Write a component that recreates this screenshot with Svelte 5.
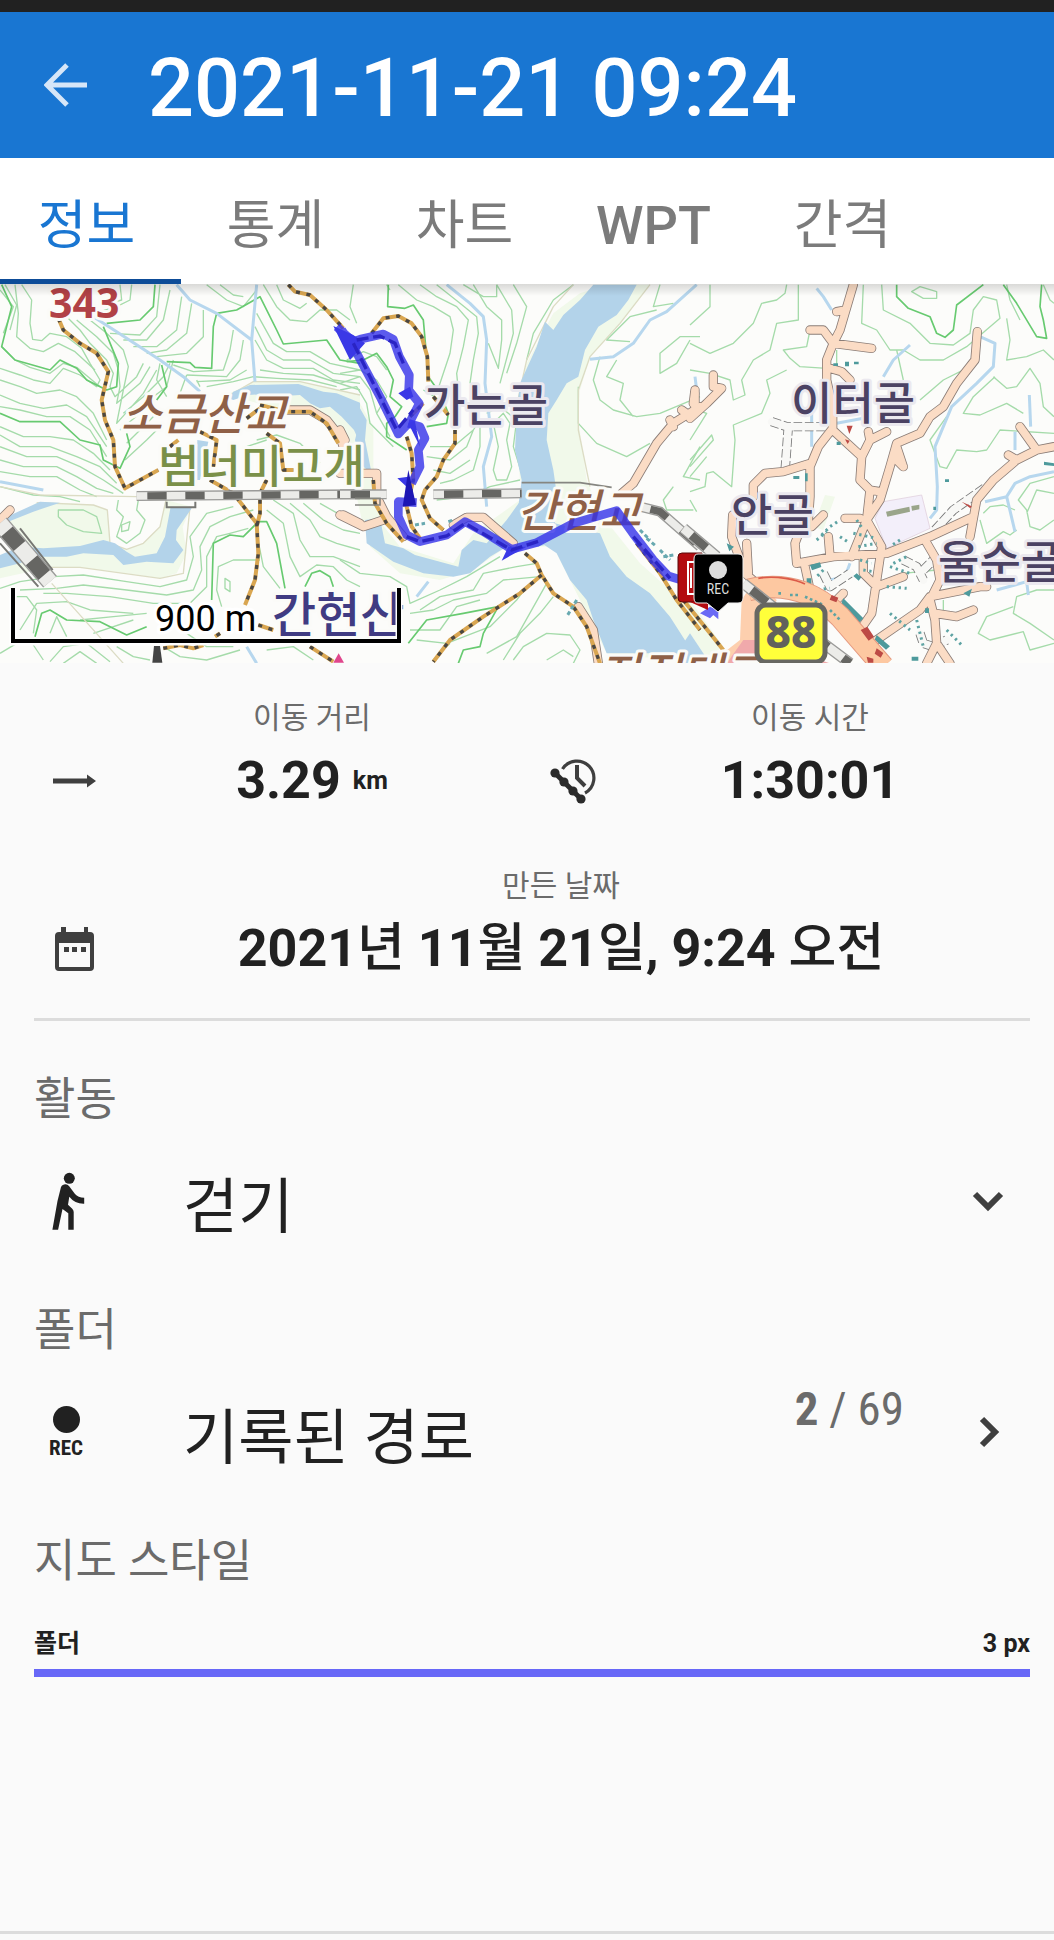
<script lang="ts">
	const tabs = ['정보', '통계', '차트', 'WPT', '간격'];
	let active = '정보';
	let activity = '걷기';

	// the map is drawn in three sheets, each at three units per pixel
	const west = 'translate(0 280) scale(.33333)';
	const mid = 'translate(340 280) scale(.33333)';
	const east = 'translate(690 280) scale(.33333)';

	const parks = [
		[west, 'M110 668 180 668 280 675 322 690 330 790 380 808 430 790 480 740 498 660 575 680 548 740 560 820 530 880 480 895 380 880 240 862 150 862 0 895 0 860 60 770 0 740Z'],
		[west, 'M690 340 760 305 900 305 1000 325 1080 345 1080 520 1040 510 1000 430 930 385 830 385 700 350Z'],
		[mid, 'M0 340 60 370 100 440 100 560 130 640 130 720 70 740 30 560 0 470Z'],
		[mid, 'M100 700 180 800 340 850 400 760 540 660 620 800 500 800 400 870 300 900 180 880 90 800Z'],
		[mid, 'M720 40 800 14 930 14 840 130 750 230 720 330 715 420 740 600 780 700 900 850 1080 1010 1080 1150 800 1120 640 800 610 620 540 600 525 400 560 250 640 100Z'],
		[east, 'M0 960 100 1100 20 1150 -100 1150Z'],
		[east, 'M405 645 435 650 400 750 370 740Z']
	];

	const water = [
		[west, 'M685 355 700 335 750 315 895 312 970 335 1010 340 1080 368 1080 490 1062 450 1025 410 990 380 960 385 930 370 900 345 850 348 800 342 745 345 700 360Z'],
		[west, 'M0 825 60 800 130 805 240 798 310 780 345 790 380 815 405 830 470 820 495 770 512 680 575 685 530 750 528 780 550 810 520 850 440 845 370 855 340 825 250 820 200 830 100 830 60 850 0 865Z'],
		[west, 'M0 720 120 665 180 668 100 695 0 735Z'],
		[west, 'M592 480 625 485 600 600 590 600Z'],
		[mid, 'M0 345 60 385 80 420 75 480 95 580 70 560 45 480 55 440 20 395 0 385Z'],
		[mid, 'M75 720 120 715 135 790 190 805 225 825 355 860 365 810 400 780 440 790 500 720 550 650 640 640 640 790 590 800 500 800 450 830 390 880 340 890 250 880 160 845 80 790Z'],
		[mid, 'M760 14 890 14 865 60 830 105 775 140 735 210 715 290 680 310 650 360 625 400 620 480 640 570 650 640 645 730 700 745 780 760 810 830 860 890 930 940 990 1010 1060 1120 800 1120 760 1020 740 960 690 900 650 820 560 760 530 720 545 600 525 510 530 400 540 310 590 200 615 125 640 150 670 105 720 60Z'],
		[east, 'M0 1060 60 1150 -60 1150Z']
	];

	const streams = [
		[west, 'M280 110 350 155 480 240 550 290 600 335'],
		[west, 'M530 14 570 60 650 100 755 180M770 14 755 180 765 305M0 605 130 630M740 1100 770 1150'],
		[mid, 'M320 14 390 70 430 110 440 180 435 310 455 470 430 560 440 680M1070 14 980 95 930 120 880 190 820 230 750 238M1065 290 1070 330M265 905 230 950'],
		[east, 'M380 25 400 50 425 90M660 195 610 240 580 290M870 170 915 190 910 260 860 310 785 380 735 500 742 620 740 690 720 715M365 400 365 500M440 430 520 415M1018 345 1022 440M975 455 975 510M1092 575 1020 590 975 610 950 650 885 665M950 650 975 755M920 930 1010 905 1015 945M480 850 465 890 420 900']
	];

	const contours = [
		[west, 'M65 14 95 60 90 130 98 178 125 182 150 160 200 170 245 205 270 250 300 300 290 320 240 285 190 265 150 310 100 300 60 285 0 265'],
		[west, 'M5 200 45 240 90 262 150 280 190 250 230 262 300 320M45 14 55 100 50 170 90 205 130 215 175 190 225 215 285 270'],
		[west, 'M0 300 60 320 110 340 180 330 230 350 280 400 320 480M0 345 60 370 130 385 200 375 260 410 320 500M0 380 60 390 140 410 210 410 270 450 320 530'],
		[west, 'M0 440 70 470 150 470 220 480 280 520 330 570M0 465 60 500 150 500 230 530 300 560 350 610M0 500 80 530 170 530 240 560 310 600 370 640M0 540 70 560 170 560 230 590 290 625 340 640M0 575 90 590 170 590 240 630 290 650M0 620 100 645 180 650 240 665'],
		[west, 'M200 110 240 150 270 190 320 240 340 280 330 320 345 350 410 290 430 250M230 120 290 170 340 220 355 270 360 320 350 370 420 310 450 260M270 120 320 160 370 210 385 260 370 330 350 430 430 340 470 270M370 400 430 350 490 290 510 250'],
		[west, 'M360 450 420 400 460 350 500 320M380 490 430 440 470 400M375 540 440 480 480 440M480 250 470 300 500 350M520 240 500 320M560 285 540 340M590 300 600 320'],
		[west, 'M395 14 390 60 350 80 300 95M360 14 365 60 310 75M330 160 420 165 470 110 480 14M370 180 440 180 490 120 510 30M400 200 470 200 530 150 545 50M440 220 500 210 560 160 575 70M470 230 560 220 610 170 610 90'],
		[west, 'M520 255 580 275 670 270 690 210 700 150M560 285 680 290 720 240 730 180M590 305 690 300 740 270M620 320 700 305 760 290 830 295 930 300 1010 320'],
		[west, 'M620 14 680 60 730 80 770 30M660 14 700 45 730 50M790 14 830 80 870 120 920 125 960 90 1010 90 1050 120M830 14 850 60 900 85 920 70M770 100 820 190 860 215 930 215 990 250 1080 270M765 140 800 210 850 240 930 240 1000 280 1080 290M765 180 800 240 850 265 940 265 1000 300 1080 310M780 270 850 280 940 285 1080 330'],
		[west, 'M175 690 200 690 250 690 290 710 305 760 250 755 200 735 175 710ZM355 660 350 690 370 710 350 770 380 790 420 760 435 720 410 690 415 660M365 735 390 725 385 750 365 755ZM675 895 690 905 690 935 675 925Z'],
		[west, 'M770 480 830 465 900 490 960 550M740 500 800 480M700 680 620 700 570 770 580 830 560 900 480 920 380 905 250 885 160 890 60 905 0 925M760 690 690 710 630 740 600 800 605 870 580 930 500 945 380 930 250 915 170 925 60 930'],
		[west, 'M745 745 690 760 650 770 620 830 620 920 570 970 460 970 330 950 200 940 130 940M780 840 700 840 655 860 650 930 665 980M770 760 790 860 840 925M800 690 850 730 870 830 900 890 950 855 1000 860 1040 900 1080 920M820 660 880 700 900 780 930 830 1000 830 1080 860M870 670 930 720 960 770 1010 790 1080 810M910 670 970 720 1030 750 1080 760M960 670 1030 710 1080 720'],
		[west, 'M50 950 80 950 110 990 100 1060M60 1050 110 970 200 965 270 990 400 1000M200 1070 170 1010 150 1060M240 1020 340 1010 440 1000M280 1060 400 1020M0 1120 50 1090 90 1080 130 1140M150 1145 190 1100 260 1090 330 1145M190 1150 240 1115 290 1150M350 1100 400 1130 450 1140M490 1100 540 1130 620 1140 720 1110M560 1060 620 1100 700 1100M800 1110 880 1100 940 1140M0 30 40 80 10 160M15 14 50 75 30 150'],
		[mid, 'M40 14 30 80 50 130M140 14 150 30M175 14 230 60 280 80 330 110 340 150 330 220 300 310 290 340M240 14 290 50 350 80 385 120 370 200 350 280 355 330M290 14 360 70 410 110 415 160 400 240 390 310M370 14 430 50 470 50 470 14M400 14 440 80 485 120 485 180 475 265 445 190M470 14 515 90 520 160 480 310M520 14 560 80 530 190 500 280'],
		[mid, 'M20 240 70 215 110 230 140 270M0 280 60 270 110 300 140 350 110 400M0 310 60 290 90 330 110 400 150 470M0 330 50 320 80 370 90 430 160 500M250 330 300 360M270 500 340 500 400 450 420 420M260 530 330 540 380 500 400 450M280 570 330 580 390 540M300 610 340 600 400 570 420 500 420 440M290 660 380 650 450 620 540 600'],
		[mid, 'M460 430 490 400 510 430 500 480 515 560 500 600 470 600 460 570 475 500ZM440 400 480 380 530 420 520 500 545 580M0 840 60 880 150 890 200 920 210 970 300 930 380 890 480 830M240 990 300 950 400 930 430 880 530 860 590 850M210 1000 280 990 340 960 440 940 490 900 600 890M210 1050 300 1050 350 980 420 960M230 1080 320 1090 450 1040 530 960 560 920M280 1140 330 1090M440 1120 530 1070 620 910M490 1140 540 1060 600 1000 640 950M520 1140 550 1100 620 1060 690 1065 720 1110 700 1150M620 1140 670 1110 700 1130'],
		[mid, 'M700 14 640 60 580 160 560 240M960 14 940 80 1000 70M950 90 870 110 800 180 870 185M1080 170 1020 170 960 220 960 280 1010 250 1050 180M780 230 760 300 780 360 820 390 890 410 960 400 1080 350M715 320 715 430 770 490 860 530 930 490M830 240 800 290 850 310 840 360 880 410M1080 500 1030 590 1080 600M1000 620 970 660 980 690 1060 690'],
		[east, 'M60 14 60 80 0 135M290 14 285 40 260 60 215 70 190 130 130 190 60 220 0 190M325 14 325 120 260 130 240 210 190 240 155 300 165 345 130 360 120 300 60 280 0 270M300 235 280 210 350 200 360 150M410 265 330 260 300 235M290 270 230 300 240 340 215 400 130 435 135 480 125 620 70 575 50 580 45 620 0 635M0 560 70 480 65 465 0 540M0 590 50 530M0 480 50 400 20 390M0 660 20 695'],
		[east, 'M520 14 515 130 560 150 600 210 640 210 690 240 760 240 830 200 930 115 920 60 880 50 850 90 840 160 790 195 720 190 660 130 580 90 575 14M665 35 690 20 740 35 740 55 700 55ZM1060 14 1080 60 1092 70M990 120 960 60 950 14M950 115 960 180 950 240 1010 230 1060 210 1092 240M690 360 760 300 840 260M770 410 720 480 750 560 770 565 800 510 860 515 890 510 930 450 1092 460M915 290 850 350 820 400 870 405 950 370 1000 400M910 290 950 325 980 320 1020 265 1050 310 1060 380 1092 410M880 700 900 680 940 675 975 690M870 720 890 790 940 755 960 765 980 750M1092 590 1020 610 985 660 1010 690 1020 740 1050 750 1092 720M1092 640 1040 630 1010 700M620 210 640 300M440 210 440 260'],
		[east, 'M1092 930 1040 930 980 950 970 1000 1020 1030 1092 1080M970 980 890 1010 865 1060 900 1080 1000 1055 1020 1110 1092 1090M760 960 760 1000M640 880 740 870 740 920M380 940 430 1000']
	];

	const majors = [
		[west, 'M5 14 35 80 5 200 45 240 150 270 180 240 230 265 260 300 320 330 350 320 355 250 310 140M0 400 60 425 180 425 240 480 300 495 310 540 360 565 390 500 380 460M320 130 420 120 460 80 465 14M500 245 570 248 585 262 635 265 640 140 650 100 710 90 780 50 830 150 850 192 980 180 1020 240 1080 250M485 255 500 320 470 360M635 960 640 790 690 765 730 770 775 725 800 725 830 790 855 925M915 920 935 880 960 872 990 890 1000 920M105 1070 125 1000 150 990 200 1020 300 1025 380 1065 440 1040'],
		[mid, 'M145 14 143 80 195 85 220 75 250 120 265 290 300 340 325 400 320 430 260 440M20 245 70 240 110 220 140 260 160 300 150 350 185 380 165 410 140 430 140 470 200 510M205 1090 260 1020 370 1000 475 980 430 1060 420 1100 370 1110 355 1150'],
		[east, 'M620 14 620 50 655 85 720 110 740 160 765 172 790 150 800 75 880 14M940 14 980 70 1040 170 1070 175 1060 120 1050 80 1055 14']
	];

	const banks = [
		[west, 'M0 620 120 645 410 650M110 668 280 675 322 690 330 790 380 808 430 790 480 740 498 660M150 862 240 862 480 895 550 880 570 680M155 910 370 1150M690 345 760 305 900 305 1080 345'],
		[mid, 'M930 14 840 130 750 230 715 330 715 450 750 620M700 14 640 80 560 240 525 400']
	];

	const lanes = [
		[east, 'M245 425 290 440 430 440M295 440 285 575M735 750 790 690 890 620M640 840 680 860 700 900M400 880 420 920 480 880M690 1060 700 1090 730 1100 770 1080M700 870 730 840']
	];

	const roads = [
		[west, 'M860 390 930 390 980 420 1020 470 1030 500M1030 705 1080 730M0 720 30 690'],
		[mid, 'M0 450 15 480M0 580 110 580 110 650 140 710 190 770M0 705 70 740 130 720M340 735 380 712 430 712 520 790M845 640 880 610 950 490 1000 430 1080 380M1000 440 990 420M1040 400 1025 390M1060 370 1065 330M715 980 760 1050 775 1150'],
		[east, 'M0 415 50 370 95 325 70 320 70 285M15 380 15 340M490 14 450 150 430 190 410 240 410 300 428 380 428 445 385 500 360 560 360 650 355 720M440 95 465 90M360 150 400 150 430 190 545 205M420 265 455 275 480 300M360 550 280 575 225 580 190 615 190 650M428 450 515 530 510 600 540 630 530 720M515 530 540 480 590 455M540 480 535 455M540 630 570 635M862 155 855 240 800 310 760 380 720 410 690 460 620 490 600 560 570 660 530 720 575 800 560 900 545 1000 510 1050M610 530 640 560M620 500 640 560M465 715 510 715M530 720 485 830M128 705 125 770 165 880 200 910M170 790 175 880M355 700 330 750 315 790 320 850 430 830 590 820 720 770 850 710M400 705 365 740M415 770 420 830M345 860 360 930M705 780 740 840 750 900 720 960 735 1020 740 1090 710 1150M1092 500 1040 510 980 540 910 600 860 660 840 770M1040 510 990 440M980 540 955 525M545 1090 690 990 720 950 870 920 890 920M735 1000 800 1010 850 990M520 830 520 880 560 920 640 890M740 1090 780 1150M460 940 440 960']
	];

	const trails = [
		[west, 'M175 115 190 150 240 190 290 220 325 275 305 360 315 420 340 480 345 560 375 625 475 570M865 14 885 35 930 45 980 90 1030 145M630 600 700 640 770 730 775 820 765 900 735 975M800 600 780 640 780 700 770 740M510 500 535 480M600 455 650 480 640 560M800 460 840 490 850 570 880 570M780 375 860 395 930 395 980 430 1015 490M775 1035 820 1050M660 1060 645 1070M490 1105 540 1095 580 1105 610 1095M930 1100 1000 1145M740 415 780 385'],
		[mid, 'M95 160 130 115 175 108 215 130 245 170 262 230 265 305M200 470 215 520 220 600 200 680 215 740 240 775M345 450 345 490 310 540 290 590 255 630 245 660 270 715 310 750M280 350 325 405M210 410 250 370M555 820 590 850 605 885 640 940 700 980 740 1040 780 1150M605 885 540 940 430 1010 330 1080 280 1145M100 600 105 670 140 730 190 785M890 790 960 880 1010 960 1080 1050'],
		[east, 'M-20 960 60 1060 100 1110']
	];

	const rails = [
		[west, 'M410 648 1080 643', 22],
		[west, 'M0 730 150 905', 46],
		[mid, 'M0 643 140 643M280 643 545 640', 22],
		[mid, 'M900 680 960 695 1080 800', 22],
		[east, 'M-20 745 80 830M160 910 260 990 400 1090 480 1150', 26]
	];

	const buildings =
		'M430 250h14v8h-14zM465 245h12v14h-12zM492 245h14v8h-14zM310 588h18v9h-18zM765 598h12v8h-12zM345 580h8v24h-8zM110 790l22 10-14 14zM360 855l30-8 4 14-28 10zM460 955l60 60-14 14-54-54zM560 1065l40 34-12 10-34-30zM820 940l26-14-8 24zM665 1130h20v12h-20zM1062 545l30 5v8l-30-3zM500 880l14 12-8 10-16-14zM705 985h12v14h-12zM730 680h8v10h-8zM350 895h14v20h-14zM320 915h26v8h-26zM440 485h12v10h-12z';

	const labels = [
		['가는골', 424, 422],
		['이터골', 791, 420],
		['안골', 731, 532],
		['울순골', 938, 579]
	];
</script>

<div class="screen">
	<header>
		<button class="back" aria-label="뒤로">
			<svg viewBox="0 0 44 44" width="44" height="44">
				<path d="M43 22H4M23 2 3 22l20 20" fill="none" stroke="#d6e6f8" stroke-width="5" />
			</svg>
		</button>
		<h1>2021-11-21 09:24</h1>
	</header>

	<nav role="tablist">
		{#each tabs as tab}
			<button
				role="tab"
				class:latin={tab === 'WPT'}
				aria-selected={tab === active}
				on:click={() => (active = tab)}>{tab}</button>
		{/each}
	</nav>

	<svg class="map" viewBox="0 284 1054 379">
		<defs>
			<linearGradient id="shade" x1="0" y1="0" x2="0" y2="1">
				<stop offset="0" stop-color="#000" stop-opacity=".14" />
				<stop offset="1" stop-color="#000" stop-opacity="0" />
			</linearGradient>
		</defs>
		<rect y="284" width="1054" height="379" fill="#fcfcfa" />
		{#each parks as [t, d]}<path class="park" transform={t} {d} />{/each}
		{#each contours as [t, d]}<path class="contour" transform={t} {d} />{/each}
		{#each majors as [t, d]}<path class="contour major" transform={t} {d} />{/each}
		{#each banks as [t, d]}<path class="bank" transform={t} {d} />{/each}
		{#each streams as [t, d]}<path class="stream" transform={t} {d} />{/each}
		{#each water as [t, d]}<path class="water" transform={t} {d} />{/each}

		<!-- school grounds and the built-up area by the station -->
		<g transform={east}>
			<path d="M555 715 580 665 695 645 720 745 590 805Z" fill="#f3effa" stroke="#dcc8d8" stroke-width="2" />
			<path d="M588 695 658 680 660 695 592 710ZM664 678 688 674V688L666 692Z" fill="#9aa58a" />
			<path d="M155 960 200 890 260 960 210 1100 150 1150 60 1150 150 1080Z" fill="#fdcfae" />
			<path d="M110 1150 160 1080 210 1080 420 1150Z" fill="#f0a9ab" />
		</g>
		{#each lanes as [t, d]}
			<path class="lane-case" transform={t} {d} />
			<path class="lane" transform={t} {d} />
		{/each}
		{#each roads as [t, d]}<path class="road-case" transform={t} {d} />{/each}
		{#each roads as [t, d]}<path class="road" transform={t} {d} />{/each}
		<g transform={east}>
			<path d={buildings} fill="#4e9a9c" />
			<path
				d="M395 765 420 740 450 720M380 780 410 755M490 760 560 775M500 720 520 750M505 800 560 790M510 840 545 850M520 870 550 875M600 860 660 880M610 850 650 830M590 920 650 925M365 930 420 925M600 1000 660 1050M680 1020 700 1100M770 1050 820 1100M400 870 380 890M630 780 600 800M450 770 480 790"
				stroke="#5ea3a3" stroke-width="9" stroke-dasharray="7 11" fill="none" />
			<path d="M175 930C300 900 390 950 450 1010L580 1160" class="highway-case" />
			<path d="M175 930C300 900 390 950 450 1010L580 1160" class="highway" />
			<path d="M205 895C260 885 320 900 345 912" fill="none" stroke="#dc5a48" stroke-width="5" />
			<path d="M265 940H280M300 945H330M345 950 400 975M420 990 450 1020" fill="none" stroke="#5ea3a3" stroke-width="8" stroke-dasharray="8 8" />
			<path d="M470 437h18l-10 25zM465 478l14 4-6 10zM425 945l20 8-6 14-20-8zM512 1050l20-10 20 30-16 12zM560 1105l20 14-8 14-18-12zM815 665l30 14-4 6zM530 1130l20 6v12h-16z" fill="#bd4a45" />
		</g>
		{#each trails as [t, d]}
			<path class="trail" transform={t} {d} />
			<path class="trail-dash" transform={t} {d} />
		{/each}
		{#each rails as [t, d, w]}
			<path transform={t} {d} fill="none" stroke="#9a9a98" stroke-width={Number(w) + 8} />
			<path transform={t} {d} fill="none" stroke="#ecece9" stroke-width={w} />
			<path transform={t} {d} fill="none" stroke="#666663" stroke-width={w} stroke-dasharray="58 56" stroke-dashoffset="-32" />
		{/each}
		<path transform={mid} d="M545 608 720 608 815 622M45 655H120V675H45" fill="none" stroke="#868681" stroke-width="5" />
		<path transform={west} d="M500 665V682H586V665M60 745 158 870M0 790 115 920" fill="none" stroke="#777773" stroke-width="6" />
		<path transform={west} d="M462 1098h18l7 50h-30z" fill="#444" />
		<path transform={west} d="M1016 1120l16 28h-32z" fill="#e0468c" />
		<path
			transform={mid}
			d="M900 750 930 780M920 775 950 800M960 810 990 840M1000 825 970 830M225 735 255 730M325 725 340 720M710 960 680 1010"
			stroke="#68a9b0" stroke-width="9" stroke-dasharray="12 8" fill="none" />

		<g class="text">
			<text class="height" x="49" y="318">343</text>
			<text class="bridge" x="121" y="430">소금산교</text>
			<text class="pass" x="158" y="483">범너미고개</text>
			<text class="bridge" x="517" y="527">간현교</text>
			<text class="bridge" x="598" y="690">지정대교</text>
			<text class="peak" x="272" y="632">간현산</text>
			{#each labels as [name, x, y]}<text class="village" {x} {y}>{name}</text>{/each}
		</g>

		<!-- recorded track -->
		<g transform={mid}>
			<g class="track">
				<path d="M-10 140 40 185 60 178 130 162 160 178 178 230 208 285 206 330 238 370 210 425 175 462 120 350 40 200 5 150" />
				<path d="M205 430 240 440 255 475 235 510 240 560 215 610" />
				<path d="M230 668 175 665 175 710 200 765 240 785 320 765 375 725 430 755 515 808 590 788 700 730 830 692 880 762 940 840 985 888 1040 905" />
			</g>
			<path d="M-20 138 40 165 75 190 30 240ZM175 340 210 320 220 350 200 360ZM485 842 505 800 560 800ZM172 595 205 590 200 620ZM205 430 225 425 240 500Z" fill="#3a38e6" />
			<path d="M188 680 205 570 228 675Z" fill="#1c16b4" />
			<path d="M40 190 170 450 220 390M50 180 120 168 165 190 190 250M200 770 240 785 320 768 375 730 515 810 600 782M880 770 990 895" fill="none" stroke="#2a24c4" stroke-width="10" stroke-dasharray="36 14" />
		</g>
		<path transform={east} d="M30 1000 60 980 85 990 85 1018 70 1005 60 1015Z" fill="#6a6af5" />

		<path d="M682 553h20v49h-20q-4 0-4-4v-41q0-4 4-4Z" fill="#b30c10" stroke="#5d0a0a" />
		<path d="M690 602h18v8Z" fill="#b30c10" />
		<path d="M694 562h-6v32h6M691 568v20" fill="none" stroke="#fff" stroke-width="2" />
		<path d="M698 554h40q5 0 5 5v39q0 5-5 5h-10l-10 9-11-9h-9q-4 0-4-5v-39q0-5 4-5Z" stroke="#eee" />
		<circle cx="718" cy="570" r="9" fill="#ddd" />
		<text class="pin" x="718" y="594">REC</text>

		<rect x="757" y="605" width="68" height="57" rx="9" fill="#ffff3a" stroke="#676762" stroke-width="5" />
		<text class="shield" x="791" y="648">88</text>

		<path d="M13 588V642H399V588" fill="none" stroke="#fff" stroke-width="7" />
		<path d="M13 588V641H399V588" fill="none" stroke="#000" stroke-width="4" />
		<text class="scale" x="155" y="631">900 m</text>
		<rect y="284" width="1054" height="12" fill="url(#shade)" />
	</svg>

	<dl class="stats">
		<div class="stat">
			<svg viewBox="0 0 48 48" width="48" height="48">
				<path d="M2 21.500h34V17.500l9 6.500-9 6.500V26.500H2Z" fill="#3f3f3f" />
			</svg>
			<dt>이동 거리</dt>
			<dd>3.29 <small>km</small></dd>
		</div>
		<div class="stat">
			<svg viewBox="0 0 48 48" width="48" height="48" fill="none" stroke="#3f3f3f">
				<path d="M13.500 12A17 17 0 1 1 36 36" stroke-width="3.200" />
				<path d="M28 8v13l8 8" stroke-width="4" />
				<path d="M6 16 32 42" stroke="#2b2b2b" stroke-width="5" />
				<g fill="#2b2b2b" stroke="none">
					<circle cx="6" cy="16" r="4.600" /><circle cx="15" cy="25" r="4.600" />
					<circle cx="24" cy="34" r="4.600" /><circle cx="32" cy="42" r="4.600" />
				</g>
			</svg>
			<dt>이동 시간</dt>
			<dd>1:30:01</dd>
		</div>
		<div class="stat wide">
			<svg viewBox="0 0 48 48" width="48" height="48" fill="#3f3f3f">
				<path fill-rule="evenodd" d="M8 7h2V2h5v5h18V2h4v5h2q4 0 4 4v31q0 4-4 4H8q-4 0-4-4V11q0-4 4-4Zm0 11v24h31V18Z" />
				<path d="M13 22h5v5h-5zM21 22h5v5h-5zM30 22h5v5h-5z" />
			</svg>
			<dt>만든 날짜</dt>
			<dd><span>2021<i>년</i> 11<i>월</i> 21<i>일</i>, 9:24 <i>오전</i></span></dd>
		</div>
	</dl>

	<main>
		<section>
			<label for="activity">활동</label>
			<div class="row">
				<svg viewBox="0 0 64 64" width="64" height="64" fill="#212121">
					<circle cx="35.300" cy="9.300" r="5.500" />
					<path d="M30 15.500Q33 14.500 35 17L41 25Q44 28.500 50.200 28.700V34.700Q41 35 35.300 27.700L34 35.700 38 39.500Q39.700 41 39.700 43V60.700H34.300V44.300L28.500 40 24.100 60.700H18.400L23.500 32 27 18Q27.500 16 30 15.500Z" />
				</svg>
				<select id="activity" bind:value={activity}>
					<option>걷기</option>
				</select>
				<svg class="chevron" viewBox="0 0 36 36" width="36" height="36">
					<path d="M5 11 18 24 31 11" />
				</svg>
			</div>
		</section>

		<section>
			<h2>폴더</h2>
			<button class="row">
				<span class="rec">REC</span>
				<span class="name">기록된 경로</span>
				<span class="count"><b>2</b> / 69</span>
				<svg class="chevron" viewBox="0 0 36 36" width="36" height="36">
					<path d="M12 5 25 18 12 31" />
				</svg>
			</button>
		</section>

		<section>
			<h2>지도 스타일</h2>
			<div class="line-style"><span>폴더</span><span>3 px</span></div>
		</section>
	</main>
	<footer></footer>
</div>

<style>
	:global(body) {
		background: #fafafa;
	}

	.screen {
		display: flex;
		flex-direction: column;
		min-height: 100vh;
		box-sizing: border-box;
		border-top: 12px solid #212121;
		color: #212121;
		font-family: Roboto, 'Noto Sans CJK KR', sans-serif;
	}

	button,
	select {
		padding: 0;
		border: 0;
		background: none;
		color: inherit;
		font: inherit;
		text-align: left;
		cursor: pointer;
	}

	h1,
	h2,
	dl,
	dd {
		margin: 0;
	}

	header {
		display: flex;
		align-items: center;
		gap: 52px;
		height: 146px;
		padding: 0 36px;
		background: #1976d2;
	}

	.back {
		display: grid;
		place-items: center;
		width: 60px;
		height: 60px;
	}

	h1 {
		padding-top: 8px;
		color: #fff;
		font-size: 81px;
		font-weight: 500;
		line-height: 96px;
	}

	nav {
		display: flex;
		height: 126px;
		margin-left: -8px;
		background: #fff;
	}

	nav button {
		flex: 0 0 189px;
		padding-top: 14px;
		border-bottom: 5px solid transparent;
		box-sizing: border-box;
		color: #7b7b7b;
		font-size: 53px;
		line-height: 80px;
		text-align: center;
	}

	nav button.latin {
		font-size: 54px;
		font-weight: 500;
	}

	nav button[aria-selected='true'] {
		border-color: #0d4c98;
		color: #1976d2;
	}

	.map {
		display: block;
		width: 100%;
	}

	.park {
		fill: #f1f9ea;
	}

	.water {
		fill: #b3d3ea;
	}

	.contour,
	.bank,
	.stream,
	.lane,
	.lane-case,
	.road,
	.road-case,
	.trail,
	.trail-dash,
	.highway,
	.highway-case {
		fill: none;
		stroke-linejoin: round;
	}

	.contour {
		stroke: #a5dbaa;
		stroke-width: 4;
	}

	.major {
		stroke: #67ca70;
		stroke-width: 5;
	}

	.bank {
		stroke: #dcdcc4;
		stroke-width: 4;
	}

	.stream {
		stroke: #b7d7ee;
		stroke-width: 9;
	}

	.lane-case,
	.road-case {
		stroke: #8b7d77;
		stroke-width: 28;
		stroke-linecap: round;
	}

	.lane-case {
		stroke: #777;
		stroke-dasharray: 26 8;
		stroke-linecap: butt;
	}

	.lane,
	.road {
		stroke: #fbdcc5;
		stroke-width: 23;
		stroke-linecap: round;
	}

	.lane {
		stroke: #f8f8f6;
	}

	.highway-case {
		stroke: #e59a80;
		stroke-width: 68;
	}

	.highway {
		stroke: #fdc8a1;
		stroke-width: 62;
	}

	.trail {
		stroke: #d9a651;
		stroke-width: 12;
	}

	.trail-dash {
		stroke: #4a4743;
		stroke-width: 10;
		stroke-dasharray: 12 20;
	}

	.track path {
		fill: none;
		stroke: #3331ea;
		stroke-opacity: 0.8;
		stroke-width: 26;
		stroke-linejoin: round;
	}

	.text {
		font-family: 'Noto Sans CJK KR', sans-serif;
		font-size: 45px;
		font-weight: 500;
		paint-order: stroke;
		stroke: #fbfbf8;
		stroke-width: 6px;
		stroke-linejoin: round;
	}

	.village {
		fill: #4b4263;
		stroke: #ebe9ef;
	}

	.bridge {
		fill: #8f6047;
		font-style: italic;
	}

	.pass {
		fill: #7a9048;
	}

	.peak {
		fill: #403b82;
		font-size: 48px;
	}

	.height {
		fill: #b14146;
		font-family: 'Noto Sans', sans-serif;
		font-size: 41px;
		font-weight: 700;
	}

	.pin {
		fill: #ddd;
		font-family: 'Roboto Condensed', Roboto, sans-serif;
		font-size: 14px;
		text-anchor: middle;
	}

	.shield {
		fill: #62625c;
		font-family: 'Noto Sans', sans-serif;
		font-size: 44px;
		font-weight: 800;
		text-anchor: middle;
	}

	.scale {
		font-size: 36px;
		paint-order: stroke;
		stroke: #fff;
		stroke-width: 7px;
		stroke-linejoin: round;
	}

	.stats {
		display: grid;
		grid-template-columns: 1fr 1fr;
		margin: 0 24px 0 34px;
		padding-bottom: 19px;
		border-bottom: 3px solid #dcdcdc;
	}

	.stat {
		display: grid;
		grid-template-columns: 82px 1fr;
		grid-template-rows: 36px 64px;
		row-gap: 13px;
		padding: 37px 24px 18px 0;
		text-align: center;
	}

	.wide {
		grid-column: span 2;
	}

	.stat svg {
		grid-area: 2 / 1;
		place-self: center;
	}

	dt {
		grid-area: 1 / 2;
		color: #6b6b6b;
		font-size: 30px;
		line-height: 36px;
	}

	dd {
		display: flex;
		grid-area: 2 / 2;
		align-items: center;
		justify-content: center;
		gap: 12px;
		font-size: 52px;
		font-weight: 700;
		line-height: 64px;
	}

	dd i {
		font-style: normal;
		font-weight: 500;
	}

	small {
		font-size: 25px;
	}

	main {
		flex: 1;
		margin: 0 24px 0 34px;
		padding-top: 53px;
	}

	label,
	h2 {
		display: block;
		color: #6b6b6b;
		font-size: 45px;
		font-weight: 400;
		line-height: 52px;
	}

	.row {
		display: grid;
		grid-template-columns: 149px 1fr auto 84px;
		align-items: center;
		width: 100%;
		height: 137px;
		margin: 6px 0 36px;
		font-size: 60px;
		line-height: 72px;
	}

	select,
	.name {
		padding-top: 14px;
	}

	select {
		grid-column: span 2;
		appearance: none;
		outline: none;
	}

	.chevron {
		justify-self: center;
		fill: none;
		stroke: #3f3f3f;
		stroke-width: 6;
	}

	.rec {
		display: grid;
		gap: 5px;
		justify-items: center;
		width: 64px;
		font-family: 'Roboto Condensed', 'Liberation Sans Narrow', sans-serif;
		font-size: 21px;
		font-weight: 700;
		line-height: 20px;
	}

	.rec::before {
		content: '';
		width: 27px;
		height: 27px;
		border-radius: 50%;
		background: #212121;
	}

	.count {
		align-self: start;
		padding: 18px 42px 0 0;
		color: #6b6b6b;
		font-family: 'Roboto Condensed', 'Liberation Sans Narrow', Roboto, sans-serif;
		font-size: 47px;
		line-height: 56px;
	}

	.line-style {
		display: flex;
		justify-content: space-between;
		margin-top: 38px;
		padding-bottom: 7px;
		border-bottom: 8px solid #6767f7;
		font-size: 25px;
		font-weight: 700;
		line-height: 36px;
	}

	footer {
		height: 6px;
		border-top: 3px solid #dcdcdc;
	}
</style>
